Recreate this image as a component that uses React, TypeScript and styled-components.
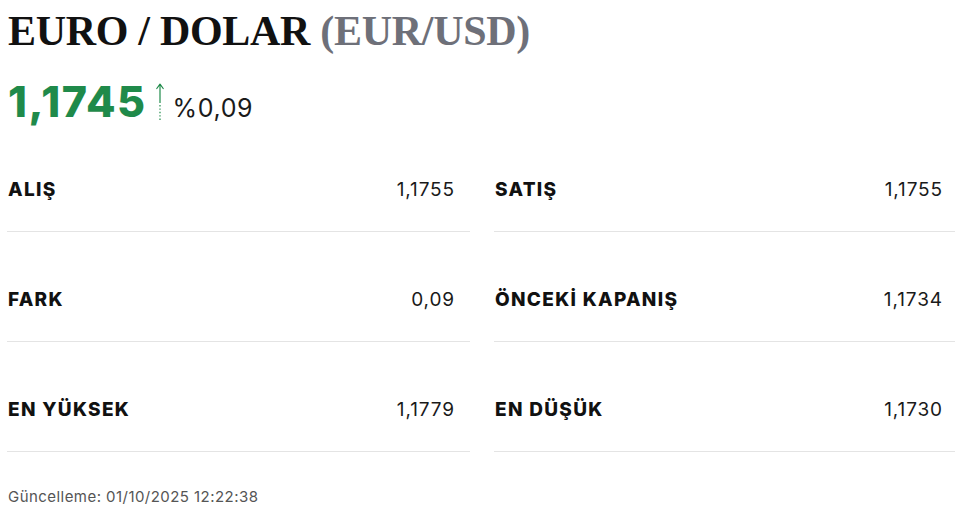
import { createGlobalStyle } from "styled-components";
import styled from "styled-components";
import { Fragment } from "react";

const GlobalStyle = createGlobalStyle`
  html, body {
    margin: 0;
    padding: 0;
    background: #ffffff;
  }
  body {
    font-family: Inter, "Liberation Sans", sans-serif;
    color: #111111;
  }
`;

const Page = styled.div`
  width: 960px;
  height: 512px;
  padding: 0 6px 0 7px;
  box-sizing: border-box;
  overflow: hidden;
`;

const Title = styled.h1`
  margin: 0;
  padding: 4px 0 0 1px;
  font-family: "Liberation Serif", "Times New Roman", serif;
  font-weight: 700;
  font-size: 42px;
  line-height: 54px;
  color: #111111;
  letter-spacing: -0.3px;
`;

const Code = styled.span`
  color: #6e7079;
`;

const PriceLine = styled.div`
  display: flex;
  align-items: center;
  margin-top: 22px;
  padding-left: 1px;
  height: 42px;
`;

const Price = styled.span`
  font-size: 43px;
  font-weight: 800;
  color: #1f8a4a;
  letter-spacing: 1.5px;
  line-height: 1;
`;

const ArrowBox = styled.span`
  display: flex;
  margin: 2px 9px 0 9px;
`;

const Change = styled.span`
  font-size: 25px;
  font-weight: 400;
  color: #1a1a1a;
  margin-top: 14px;
  letter-spacing: 0.6px;
`;

const Grid = styled.div`
  display: grid;
  grid-template-columns: 463px 461px;
  column-gap: 24px;
`;

const Row = styled.div<{ $padRight: number }>`
  display: flex;
  justify-content: space-between;
  align-items: center;
  padding: 57px ${(p) => p.$padRight}px 30px 1px;
  line-height: 22px;
  border-bottom: 1px solid #e4e4e4;
`;

const Label = styled.span`
  font-size: 19px;
  font-weight: 800;
  color: #111111;
  letter-spacing: 1.3px;
`;

const Value = styled.span`
  font-size: 19px;
  font-weight: 400;
  color: #1a1a1a;
  letter-spacing: 0.9px;
`;

const Updated = styled.div`
  margin-top: 35px;
  padding-left: 1px;
  font-size: 15px;
  color: #555555;
  letter-spacing: 0.45px;
`;

const UpArrow = () => (
  <svg width="8" height="39" viewBox="0 0 8 39">
    <path d="M0.8 5.5 L4 1.2 L7.2 5.5" fill="none" stroke="#1f8a4a" strokeWidth="1.2" strokeLinecap="round" strokeLinejoin="round" />
    <line x1="4" y1="1.5" x2="4" y2="20" stroke="#1f8a4a" strokeWidth="1.2" />
    <line x1="4" y1="22" x2="4" y2="38" stroke="#1f8a4a" strokeWidth="1.2" strokeDasharray="1.4 2" />
  </svg>
);

const rows: [string, string, string, string][] = [
  ["ALIŞ", "1,1755", "SATIŞ", "1,1755"],
  ["FARK", "0,09", "ÖNCEKİ KAPANIŞ", "1,1734"],
  ["EN YÜKSEK", "1,1779", "EN DÜŞÜK", "1,1730"],
];

export default function App() {
  return (
    <Page>
      <GlobalStyle />
      <Title>
        EURO / DOLAR <Code>(EUR/USD)</Code>
      </Title>
      <PriceLine>
        <Price>1,1745</Price>
        <ArrowBox>
          <UpArrow />
        </ArrowBox>
        <Change>%0,09</Change>
      </PriceLine>
      <Grid>
        {rows.map(([l1, v1, l2, v2]) => (
          <Fragment key={l1}>
            <Row $padRight={15}>
              <Label>{l1}</Label>
              <Value>{v1}</Value>
            </Row>
            <Row $padRight={12}>
              <Label>{l2}</Label>
              <Value>{v2}</Value>
            </Row>
          </Fragment>
        ))}
      </Grid>
      <Updated>Güncelleme: 01/10/2025 12:22:38</Updated>
    </Page>
  );
}
